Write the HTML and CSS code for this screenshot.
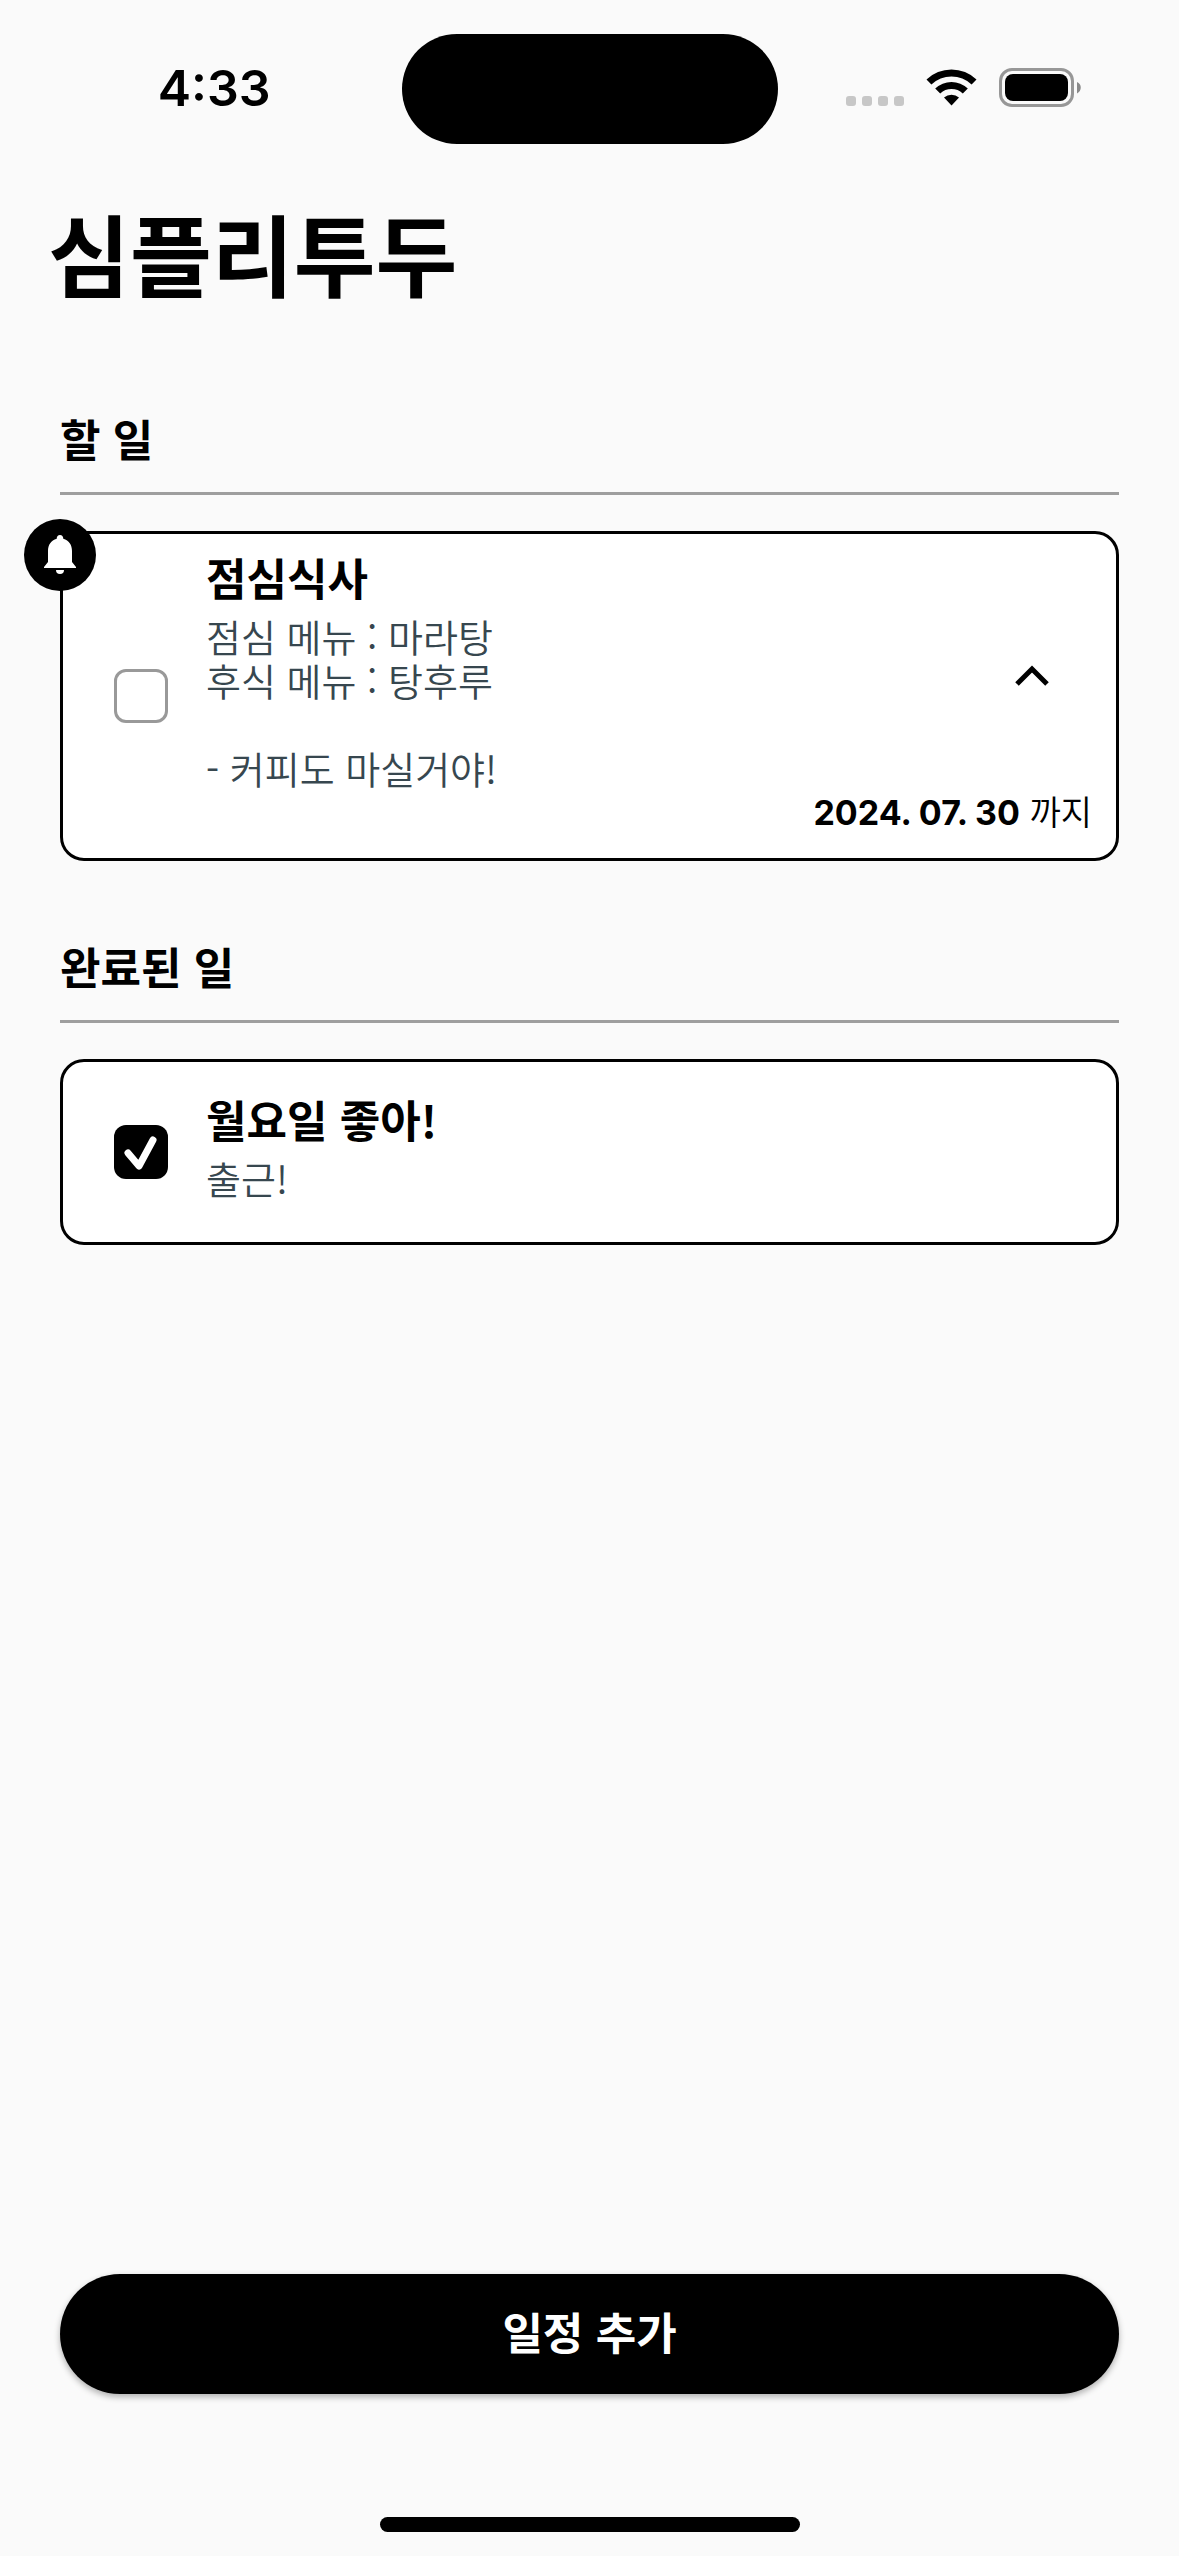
FILE: index.html
```html
<!DOCTYPE html>
<html lang="ko">
<head>
<meta charset="utf-8">
<meta name="viewport" content="width=device-width, initial-scale=1">
<title>심플리투두</title>
<link rel="stylesheet" href="styles.css">
</head>
<body>
<div class="screen">
  <div class="status-bar">
    <time class="status-time">4:33</time>
    <div class="island"></div>
    <div class="status-icons">
      <svg class="icon-signal" viewBox="0 0 58 37" fill="#c7c7c7" aria-hidden="true">
        <rect y="27" width="10" height="10" rx="3"/><rect x="16" y="27" width="10" height="10" rx="3"/><rect x="32" y="27" width="10" height="10" rx="3"/><rect x="48" y="27" width="10" height="10" rx="3"/>
      </svg>
      <svg class="icon-wifi" viewBox="0 0 51 37" aria-hidden="true">
        <path d="M0.500 10.500a36 36 0 0 1 50 0l-4.900 5a29 29 0 0 0-40.200 0z"/>
        <path d="M9.200 19.500a23.500 23.500 0 0 1 32.600 0l-5 5a16.500 16.500 0 0 0-22.600 0z"/>
        <path d="M18 28.500a11.500 11.500 0 0 1 15 0L25.500 36.500z"/>
      </svg>
      <svg class="icon-battery" viewBox="0 0 83 39" aria-hidden="true">
        <rect x="1.500" y="1.500" width="72" height="36" rx="11.500" fill="none" stroke="#979797" stroke-width="3"/>
        <rect x="6" y="6" width="63" height="27" rx="8"/>
        <path d="M78 14c5 2 5 9 0 11.500z" fill="#8a8a8a"/>
      </svg>
    </div>
  </div>

  <header class="app-header"><h1 class="app-title">심플리투두</h1></header>

  <main class="content">
    <section class="section">
      <h2 class="section-title">할 일</h2>
      <article class="card card--due">
        <span class="badge">
          <svg class="icon-bell" viewBox="0 0 32 40" fill="#fff" aria-hidden="true">
            <path d="M16 0c2 0 3.300 1.600 3.300 3.700C25 5 28 10 28 16v11l4 5v1H0v-1l4-5V16C4 10 7 5 12.700 3.700 12.700 1.600 14 0 16 0z"/>
            <path d="M12 35h8a4 4 0 0 1-8 0z"/>
          </svg>
        </span>
        <input class="check" type="checkbox" id="todo-1">
        <div class="card-body">
          <label class="card-title" for="todo-1">점심식사</label>
          <p class="card-text">점심 메뉴 : 마라탕
후식 메뉴 : 탕후루

- 커피도 마실거야!</p>
        </div>
        <div class="card-side">
          <button class="toggle" type="button" aria-label="접기">
            <svg class="icon-chevron" viewBox="0 0 36 24" fill="none" stroke="#000" stroke-width="5" aria-hidden="true"><path d="M3 20L18 5l15 15"/></svg>
          </button>
          <p class="due"><strong class="due-date">2024. 07. 30</strong> 까지</p>
        </div>
      </article>
    </section>

    <section class="section">
      <h2 class="section-title">완료된 일</h2>
      <article class="card">
        <input class="check" type="checkbox" id="todo-2" checked>
        <div class="card-body">
          <label class="card-title" for="todo-2">월요일 좋아!</label>
          <p class="card-text">출근!</p>
        </div>
      </article>
    </section>
  </main>

  <footer class="footer">
    <button class="add-button" type="button">일정 추가</button>
    <div class="home-indicator"></div>
  </footer>
</div>
</body>
</html>
```
FILE: styles.css
```css
* { box-sizing: border-box; }

body {
  margin: 0;
  background: #fafafa;
  color: #000;
  font-family: "Noto Sans CJK KR", sans-serif;
}

h1, h2, p { margin: 0; }

button {
  border: 0;
  padding: 0;
  font: inherit;
  cursor: pointer;
}

.screen {
  display: flex;
  flex-direction: column;
  min-height: 100vh;
}

.status-bar {
  display: grid;
  grid-template-columns: 1fr 376px 1fr;
  align-items: center;
  height: 178px;
}

.status-time {
  padding: 0 0 2px 27px;
  text-align: center;
  font: 600 50px/60px Inter, sans-serif;
}

.island {
  height: 110px;
  border-radius: 55px;
  background: #000;
}

.status-icons {
  display: flex;
  align-items: center;
  justify-content: flex-end;
  gap: 22px;
  padding: 0 97px 3px 0;
}

.icon-signal { width: 58px; height: 37px; }
.icon-wifi { width: 51px; height: 37px; }
.icon-battery { width: 83px; height: 39px; }

.app-header { padding: 8px 48px 0; }

.app-title {
  font-size: 89px;
  font-weight: 700;
  line-height: 132px;
}

.content {
  display: flex;
  flex: 1;
  flex-direction: column;
  gap: 69px;
  padding: 84px 60px 0;
}

.section {
  display: flex;
  flex-direction: column;
  gap: 36px;
}

.section-title {
  padding-bottom: 18px;
  border-bottom: 3px solid #9e9e9e;
  font-size: 44px;
  font-weight: 700;
  line-height: 72px;
}

.card {
  position: relative;
  display: flex;
  border: 3px solid #000;
  border-radius: 24px;
  background: #fff;
}

.badge {
  position: absolute;
  top: -15px;
  left: -39px;
  display: grid;
  place-items: center;
  width: 72px;
  height: 72px;
  border-radius: 50%;
  background: #000;
}

.icon-bell { width: 32px; height: 40px; }

.check {
  appearance: none;
  align-self: center;
  flex: none;
  width: 54px;
  height: 54px;
  margin: 0 38px 0 51px;
  border: 3px solid #999;
  border-radius: 12px;
  background: #fff;
}

.check:checked {
  border: 0;
  background: #000 url("data:image/svg+xml,%3Csvg xmlns='http://www.w3.org/2000/svg' viewBox='0 0 54 54' fill='none' stroke='white' stroke-width='7' stroke-linecap='round' stroke-linejoin='round'%3E%3Cpath d='M14 28L25 41L39 15'/%3E%3C/svg%3E") center / 54px 54px;
}

.card-body {
  display: flex;
  flex: 1;
  flex-direction: column;
  gap: 4px;
  align-self: center;
  padding: 24px 0 42px;
}

.card--due .card-body { padding: 10px 0 68px; }

.card-title {
  font-size: 44px;
  font-weight: 700;
  line-height: 66px;
}

.card-text {
  color: #37474f;
  font-size: 38px;
  font-weight: 350;
  line-height: 44px;
  white-space: pre-line;
}

.card-side {
  display: flex;
  flex-direction: column;
  align-items: flex-end;
  justify-content: space-between;
  padding: 106px 24px 18px 0;
}

.toggle {
  display: grid;
  place-items: center;
  width: 72px;
  height: 72px;
  margin-right: 24px;
  background: none;
}

.icon-chevron { width: 36px; height: 24px; }

.due {
  font-size: 34px;
  font-weight: 350;
  line-height: 54px;
}

.due-date {
  font-family: Inter, sans-serif;
  font-weight: 700;
}

.footer {
  display: flex;
  flex-direction: column;
  gap: 123px;
  padding: 0 60px 24px;
}

.add-button {
  height: 120px;
  padding-bottom: 6px;
  border-radius: 60px;
  background: #000;
  color: #fff;
  font-size: 44px;
  font-weight: 700;
  box-shadow: 0 3px 6px rgba(0, 0, 0, 0.3);
}

.home-indicator {
  align-self: center;
  width: 420px;
  height: 15px;
  border-radius: 8px;
  background: #000;
}
```
